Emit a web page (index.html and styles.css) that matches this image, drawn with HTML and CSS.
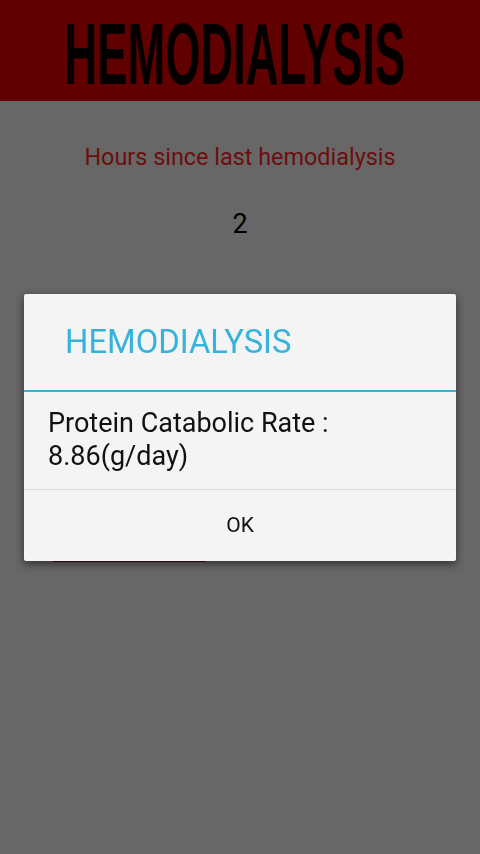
FILE: index.html
```html
<!DOCTYPE html>
<html lang="en">
<head>
    <meta name="viewport" content="width=device-width, initial-scale=1">
    <title>Hemodialysis</title>
    <link rel="stylesheet" href="styles.css">
</head>
<body>
    <header class="banner">
        <span class="banner-title">HEMODIALYSIS</span>
    </header>

    <main class="content">
        <p class="hours-label">Hours since last hemodialysis</p>
        <p class="hours-value">2</p>
        <div class="calc-button"></div>
    </main>

    <div class="overlay">
        <div class="dialog">
            <div class="dialog-title">HEMODIALYSIS</div>
            <div class="dialog-body">Protein Catabolic Rate :<br>8.86(g/day)</div>
            <div class="dialog-actions">
                <button type="button" class="dialog-ok">OK</button>
            </div>
        </div>
    </div>
</body>
</html>
```

FILE: styles.css
```css
body {
    margin: 0;
    height: 854px;
    background-color: #676767;
    font-family: Roboto, "Noto Sans", sans-serif;
    overflow: hidden;
}

.banner {
    height: 101px;
    padding-right: 10px;
    background-color: #600000;
    display: flex;
    justify-content: center;
    align-items: center;
    overflow: hidden;
}

.banner-title {
    font-family: "Liberation Sans", Arial, sans-serif;
    font-weight: bold;
    font-size: 88px;
    line-height: 1;
    color: #050000;
    transform: scaleX(0.515);
    white-space: nowrap;
    margin-top: 6px;
}

.content {
    display: flex;
    flex-direction: column;
}

.hours-label {
    margin: 42px 0 0;
    font-size: 23.4px;
    line-height: 28px;
    text-align: center;
    color: #6c0e0e;
}

.hours-value {
    margin: 37px 0 0;
    font-size: 27px;
    line-height: 32px;
    text-align: center;
    color: #000;
}

.calc-button {
    width: 155px;
    height: 50px;
    margin: 272px 0 0 52px;
    background-color: #4a0a0a;
    border-radius: 3px;
}

.overlay {
    position: fixed;
    inset: 0;
    display: flex;
    justify-content: center;
    align-items: center;
}

.dialog {
    width: 432px;
    background-color: #f4f4f4;
    border-radius: 2px;
    box-shadow: 0 3px 8px rgba(0, 0, 0, 0.55);
}

.dialog-title {
    height: 96px;
    display: flex;
    align-items: center;
    padding-left: 41px;
    font-size: 32.8px;
    color: #36b3dd;
    border-bottom: 2px solid #36b3dd;
}

.dialog-body {
    padding: 15px 24px 16px;
    font-size: 27px;
    line-height: 33px;
    color: #111;
    border-bottom: 1px solid #dcdcdc;
}

.dialog-actions {
    height: 71px;
    display: flex;
}

.dialog-ok {
    flex: 1;
    border: none;
    background: transparent;
    font-family: Roboto, "Noto Sans", sans-serif;
    font-size: 21px;
    color: #111;
    cursor: pointer;
}
```
